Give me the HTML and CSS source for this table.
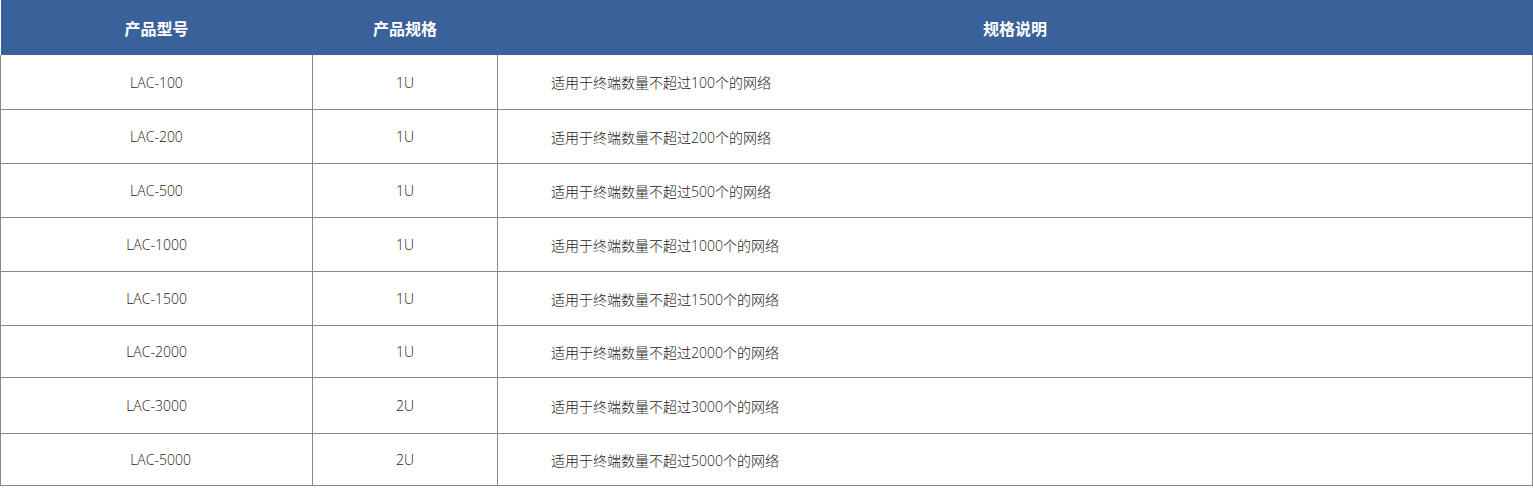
FILE: index.html
```html
<!DOCTYPE html>
<html lang="zh-CN">
<head>
    <meta charset="UTF-8">
    <meta name="viewport" content="width=device-width, initial-scale=1.0">
    <title>产品规格</title>
    <link rel="stylesheet" href="styles.css">
</head>
<body>
    <table class="spec-table">
        <thead>
            <tr>
                <th class="col-model">产品型号</th>
                <th class="col-size">产品规格</th>
                <th class="col-desc">规格说明</th>
            </tr>
        </thead>
        <tbody>
            <tr class="row-first">
                <td class="model">LAC-100</td>
                <td class="size">1U</td>
                <td class="desc">适用于终端数量不超过100个的网络</td>
            </tr>
            <tr>
                <td class="model">LAC-200</td>
                <td class="size">1U</td>
                <td class="desc">适用于终端数量不超过200个的网络</td>
            </tr>
            <tr>
                <td class="model">LAC-500</td>
                <td class="size">1U</td>
                <td class="desc">适用于终端数量不超过500个的网络</td>
            </tr>
            <tr>
                <td class="model">LAC-1000</td>
                <td class="size">1U</td>
                <td class="desc">适用于终端数量不超过1000个的网络</td>
            </tr>
            <tr>
                <td class="model">LAC-1500</td>
                <td class="size">1U</td>
                <td class="desc">适用于终端数量不超过1500个的网络</td>
            </tr>
            <tr class="row-short">
                <td class="model">LAC-2000</td>
                <td class="size">1U</td>
                <td class="desc">适用于终端数量不超过2000个的网络</td>
            </tr>
            <tr class="row-tall">
                <td class="model">LAC-3000</td>
                <td class="size">2U</td>
                <td class="desc">适用于终端数量不超过3000个的网络</td>
            </tr>
            <tr class="row-short">
                <td class="model shifted">LAC-5000</td>
                <td class="size">2U</td>
                <td class="desc">适用于终端数量不超过5000个的网络</td>
            </tr>
        </tbody>
    </table>
</body>
</html>
```

FILE: styles.css
```css
body {
    margin: 0;
    font-family: "Open Sans", "Noto Sans CJK SC", sans-serif;
    color: #1a1a1a;
    background: #fff;
}

.spec-table {
    width: 1533px;
    border-collapse: collapse;
    table-layout: fixed;
}

.spec-table th {
    background-color: #3a6199;
    color: #fff;
    font-size: 16px;
    font-weight: bold;
    height: 55px;
    padding: 0;
    text-align: center;
    border: none;
}

.col-model {
    width: 312px;
}

.col-size {
    width: 185px;
}

.spec-table td {
    height: 53px;
    padding: 0;
    font-size: 14px;
    font-weight: 300;
    border: 1px solid #888;
    text-align: center;
}

.spec-table tbody tr:first-child td {
    border-top: none;
}

.row-first td {
    height: 54px;
}

.row-short td {
    height: 51px;
}

.row-tall td {
    height: 55px;
}

.spec-table td.shifted {
    padding-left: 8px;
}

.spec-table td.desc {
    text-align: left;
    padding-left: 53px;
}
```
